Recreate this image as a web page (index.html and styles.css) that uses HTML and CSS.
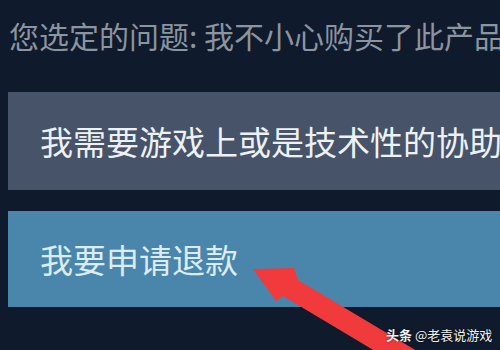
FILE: index.html
```html
<!DOCTYPE html>
<html lang="zh-CN">
<head>
<meta charset="utf-8">
<link rel="stylesheet" href="styles.css">
</head>
<body>
<div class="page">
  <div class="title">您选定的问题: 我不小心购买了此产品</div>
  <div class="options">
    <div class="option option-gray">我需要游戏上或是技术性的协助</div>
    <div class="option option-blue">我要申请退款</div>
  </div>
  <svg class="arrow" width="500" height="350" viewBox="0 0 500 350">
    <polygon points="253,269 294,268 298,280 432,360 390,360 283,296 276,301" fill="#f03a3c"/>
  </svg>
  <div class="watermark"><b>头条</b> @老袁说游戏</div>
</div>
</body>
</html>
```
FILE: styles.css
```css
html, body {
  margin: 0;
  padding: 0;
  background: #0f1a2c;
  overflow: hidden;
}
.page {
  position: relative;
  width: 500px;
  height: 350px;
  overflow: hidden;
  font-family: "Noto Sans CJK SC", "Noto Sans", sans-serif;
}
.title {
  padding: 15px 0 0 9px;
  height: 40px;
  line-height: 40px;
  font-size: 30px;
  color: #8b949f;
  white-space: nowrap;
}
.options {
  display: flex;
  flex-direction: column;
  gap: 21px;
  margin: 37px 0 0 8px;
  width: 560px;
}
.option {
  display: flex;
  align-items: center;
  padding-left: 32px;
  font-size: 33px;
  white-space: nowrap;
}
.option-gray {
  height: 98px;
  background: #465368;
  color: #eef1f4;
}
.option-blue {
  height: 96px;
  background: #4a86ab;
  color: #dcecf5;
}
.arrow {
  position: absolute;
  left: 0;
  top: 0;
}
.watermark {
  position: absolute;
  left: 386px;
  top: 326px;
  font-size: 13px;
  line-height: 18px;
  color: #f2f2f2;
  white-space: nowrap;
  text-shadow: 0 0 2px rgba(0, 0, 0, 0.6);
}
.watermark b {
  font-weight: 700;
}
```
